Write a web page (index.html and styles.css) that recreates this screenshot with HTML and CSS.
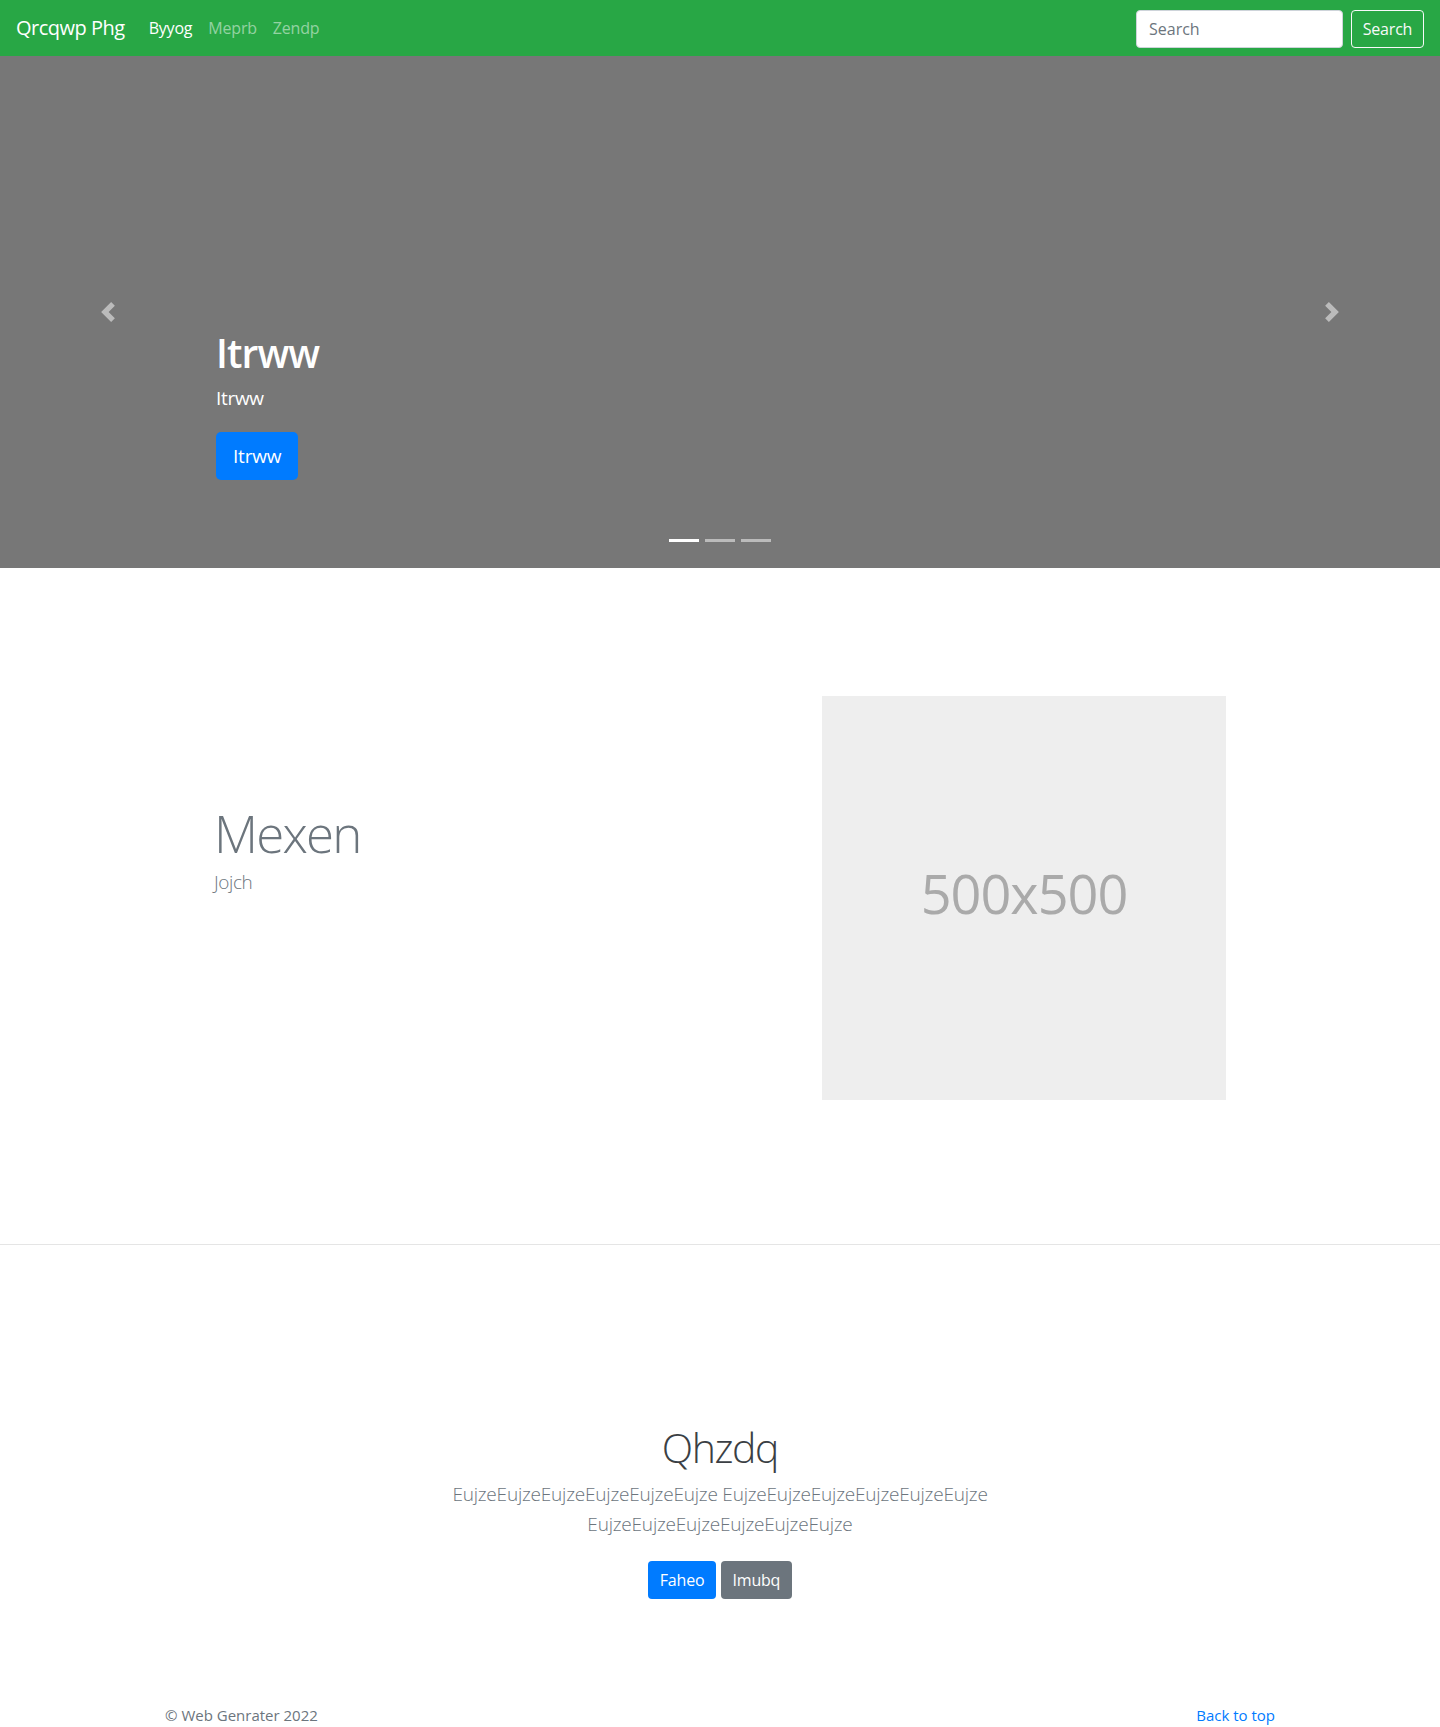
FILE: index.html
```html
<!DOCTYPE html>
<html lang="en">
<head>
<meta charset="utf-8">
<title>Qrcqwp Phg</title>
<link rel="stylesheet" href="styles.css">
</head>
<body>
<header class="navbar">
  <a class="brand" href="#">Qrcqwp Phg</a>
  <nav class="nav">
    <a class="nav-link active" href="#">Byyog</a>
    <a class="nav-link" href="#">Meprb</a>
    <a class="nav-link" href="#">Zendp</a>
  </nav>
  <form class="search">
    <input class="search-input" type="text" placeholder="Search">
    <button class="search-btn" type="button">Search</button>
  </form>
</header>

<section class="carousel">
  <a class="control control-prev" href="#">
    <svg viewBox="0 0 8 8" width="20" height="20"><path fill="#fff" d="M5.25 0l-4 4 4 4 1.5-1.5-2.5-2.5 2.5-2.5-1.5-1.5z"/></svg>
  </a>
  <div class="caption">
    <h1 class="caption-title">Itrww</h1>
    <p class="caption-text">Itrww</p>
    <div><a class="btn btn-lg btn-primary" href="#">Itrww</a></div>
  </div>
  <a class="control control-next" href="#">
    <svg viewBox="0 0 8 8" width="20" height="20"><path fill="#fff" d="M2.75 0l-1.5 1.5 2.5 2.5-2.5 2.5 1.5 1.5 4-4-4-4z"/></svg>
  </a>
  <ol class="indicators">
    <li class="ind active"></li>
    <li class="ind"></li>
    <li class="ind"></li>
  </ol>
</section>

<section class="container featurette">
  <div class="feat-text">
    <h2 class="feat-heading">Mexen</h2>
    <p class="feat-lead">Jojch</p>
  </div>
  <div class="placeholder">500x500</div>
</section>

<hr class="divider">

<section class="jumbotron">
  <h1 class="jumbo-heading">Qhzdq</h1>
  <p class="jumbo-lead">EujzeEujzeEujzeEujzeEujzeEujze EujzeEujzeEujzeEujzeEujzeEujze EujzeEujzeEujzeEujzeEujzeEujze</p>
  <p class="jumbo-actions">
    <a class="btn btn-primary" href="#">Faheo</a>
    <a class="btn btn-secondary" href="#">Imubq</a>
  </p>
</section>

<footer class="footer">
  <div class="container footer-row">
    <p class="copy">© Web Genrater 2022</p>
    <a class="top-link" href="#">Back to top</a>
  </div>
</footer>
</body>
</html>
```

FILE: styles.css
```css
* { box-sizing: border-box; }

body {
  margin: 0;
  font-family: "Open Sans", "Noto Sans", sans-serif;
  font-size: 16px;
  line-height: 1.5;
  color: #212529;
  background: #fff;
}

a { text-decoration: none; }

.navbar {
  display: flex;
  align-items: center;
  height: 56px;
  padding: 0 16px;
  background: #28a745;
}

.brand {
  color: #fff;
  font-size: 20px;
  line-height: 30px;
  margin-right: 16px;
  letter-spacing: -0.5px;
}

.nav { display: flex; }

.nav-link {
  color: rgba(255, 255, 255, 0.5);
  padding: 8px 8px;
  font-size: 16px;
  letter-spacing: -0.2px;
}

.nav-link.active { color: #fff; }

.search {
  margin-left: auto;
  display: flex;
  align-items: center;
  padding-top: 2px;
}

.search-input {
  width: 207px;
  height: 38px;
  margin-right: 8px;
  padding: 6px 12px;
  border: 1px solid #ced4da;
  border-radius: 4px;
  font-family: inherit;
  font-size: 16px;
  color: #495057;
}

.search-input::placeholder { color: #6c757d; }

.search-btn {
  width: 73px;
  height: 38px;
  padding: 0;
  border: 1px solid #f8f9fa;
  border-radius: 4px;
  background: transparent;
  color: #f8f9fa;
  font-family: inherit;
  font-size: 16px;
  letter-spacing: -0.2px;
}

.carousel {
  position: relative;
  height: 512px;
  background: #777;
  display: flex;
  flex-direction: column;
  justify-content: flex-end;
}

.caption {
  padding: 0 216px 88px;
  color: #fff;
}

.caption-title {
  margin: 0 0 6px;
  font-size: 39px;
  line-height: 48px;
  font-weight: 600;
  letter-spacing: -0.9px;
}

.caption-text {
  margin: 0 0 19px;
  font-size: 19px;
  line-height: 30px;
  letter-spacing: -0.3px;
}

.btn {
  display: inline-block;
  color: #fff;
  border-radius: 4px;
  font-size: 16px;
  line-height: 24px;
  padding: 7px 12px;
  letter-spacing: -0.2px;
  vertical-align: middle;
}

.btn-lg {
  font-size: 19px;
  line-height: 30px;
  padding: 9px 17px;
  border-radius: 5px;
}

.btn-primary { background: #007bff; }
.btn-secondary { background: #6c757d; }

.control {
  position: absolute;
  top: 0;
  bottom: 0;
  width: 216px;
  display: flex;
  align-items: center;
  justify-content: center;
  opacity: 0.5;
}

.control svg { display: block; }

.control-prev { left: 0; }
.control-next { right: 0; }

.indicators {
  position: absolute;
  left: 0;
  right: 0;
  bottom: 26px;
  margin: 0;
  padding: 0;
  list-style: none;
  display: flex;
  justify-content: center;
}

.ind {
  width: 30px;
  height: 3px;
  margin: 0 3px;
  background: #fff;
  opacity: 0.5;
}

.ind.active { opacity: 1; }

.container {
  width: 1110px;
  margin: 0 auto;
}

.featurette {
  display: flex;
  align-items: flex-start;
  padding: 128px 0 144px;
}

.feat-text {
  padding: 109px 0 0 49px;
  color: #6c757d;
}

.feat-heading {
  margin: 0 0 6px;
  font-size: 51px;
  line-height: 56px;
  font-weight: 300;
  letter-spacing: -1.8px;
}

.feat-lead {
  margin: 0;
  font-size: 19px;
  line-height: 30px;
  font-weight: 300;
  letter-spacing: -0.4px;
}

.placeholder {
  margin-left: auto;
  margin-right: 49px;
  width: 404px;
  height: 404px;
  padding-bottom: 10px;
  background: #eee;
  color: #aaa;
  display: flex;
  align-items: center;
  justify-content: center;
  font-size: 54px;
  letter-spacing: -1px;
}

.divider {
  margin: 0;
  border: 0;
  border-top: 1px solid #e5e5e5;
}

.jumbotron {
  text-align: center;
  padding: 176px 0 48px;
}

.jumbo-heading {
  margin: 0 0 6px;
  font-size: 41px;
  line-height: 52px;
  font-weight: 300;
  color: #3b3f44;
  letter-spacing: -1.4px;
}

.jumbo-lead {
  width: 570px;
  margin: 0 auto 14px;
  font-size: 19px;
  line-height: 30px;
  font-weight: 300;
  color: #6c757d;
  letter-spacing: -0.2px;
}

.jumbo-actions {
  margin: 0;
}

.jumbo-actions .btn { margin: 8px 0; }

.footer {
  padding-top: 48px;
  color: #6c757d;
}

.footer-row {
  display: flex;
  justify-content: space-between;
  font-size: 15px;
  line-height: 24px;
}

.copy { margin: 0; }

.top-link { color: #007bff; }
```
